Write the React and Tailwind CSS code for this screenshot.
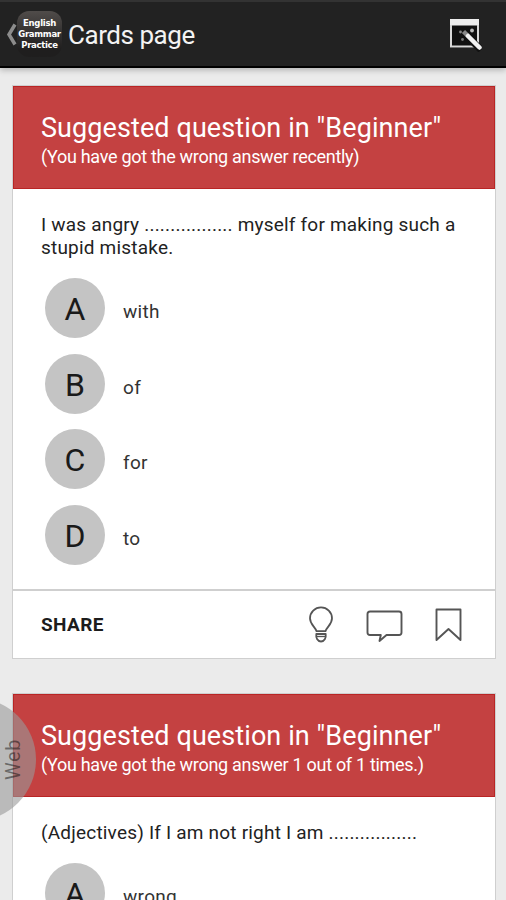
import React from "react";

const cards = [
  {
    title: 'Suggested question in "Beginner"',
    note: "(You have got the wrong answer recently)",
    question: "I was angry ................. myself for making such a stupid mistake.",
    answers: ["with", "of", "for", "to"],
  },
  {
    title: 'Suggested question in "Beginner"',
    note: "(You have got the wrong answer 1 out of 1 times.)",
    question: "(Adjectives) If I am not right I am .................",
    answers: ["wrong"],
  },
];

const WandIcon = () => (
  <svg width="34" height="34" viewBox="0 0 34 34" fill="none">
    <rect x="2" y="1" width="29" height="29" fill="#111" />
    <rect x="2" y="1" width="29" height="6.500" fill="#eeeeee" />
    <path d="M3 7V28.600H30V7" stroke="#d8d8d8" strokeWidth="2" />
    <circle cx="24" cy="12.500" r="1.9" fill="#bbb" />
    <circle cx="12.500" cy="14" r="1.4" fill="#888" />
    <circle cx="14.500" cy="21.500" r="1.4" fill="#777" />
    <path d="M17 16L33 32" stroke="#111" strokeWidth="7" />
    <path d="M15.500 13.500L20 18" stroke="#888" strokeWidth="4.500" />
    <path d="M20 18L31.500 29.500" stroke="#f2f2f2" strokeWidth="4.500" strokeLinecap="round" />
  </svg>
);

const BulbIcon = () => (
  <svg width="24" height="37" viewBox="0 0 24 37" fill="none" stroke="#555" strokeWidth="1.8" strokeLinejoin="round">
    <path d="M7.5 25.2C6 20.500 1 18.500 1 12.300A11 11 0 0 1 23 12.300C23 18.500 18 20.500 16.500 25.200Z" />
    <path d="M7.300 28H16.700C17.300 32 15.300 35.500 12 35.500S6.700 32 7.300 28Z" />
    <path d="M8 30.500H16" strokeWidth="1.300" />
  </svg>
);

const CommentIcon = () => (
  <svg className="mt-1" width="37" height="33" viewBox="0 0 37 33" fill="none" stroke="#555" strokeWidth="1.9" strokeLinejoin="round">
    <path d="M4 1.500H33Q35.500 1.500 35.500 4V22.500Q35.500 25 33 25H20.500L13.500 31L14.800 25H4Q1.500 25 1.500 22.500V4Q1.500 1.500 4 1.500Z" />
  </svg>
);

const BookmarkIcon = () => (
  <svg width="27" height="34" viewBox="0 0 27 34" fill="none" stroke="#555" strokeWidth="1.9" strokeLinejoin="round">
    <path d="M1.500 1.500H25.500V32L13.500 21L1.500 32Z" />
  </svg>
);

const Header = () => (
  <header className="h-[68px] shrink-0 flex items-center bg-[#222222] border-t-2 border-[#333333] border-b-2 border-b-black shadow-[0_2px_6px_rgba(0,0,0,0.25)]">
    <svg className="ml-[5px]" width="12" height="23" viewBox="0 0 12 23" fill="none">
      <path d="M10 1.500L4 11.500L10 21.500" stroke="#8c8c8c" strokeWidth="3.500" />
    </svg>
    <div className="w-[45px] h-[46px] rounded-[12px] bg-linear-to-b from-[#504c4a] to-[#1f1e1e] to-85% flex flex-col items-center pt-[7px] font-['DejaVu_Sans'] font-bold text-white text-[8.5px] leading-[11px] tracking-[-0.3px]">
      <span>English</span>
      <span>Grammar</span>
      <span>Practice</span>
    </div>
    <h1 className="ml-1.5 mt-[3px] text-[26px] tracking-[-0.45px] text-[#f3f3f3]">Cards page</h1>
    <div className="ml-auto mr-[24px] mt-0.5">
      <WandIcon />
    </div>
  </header>
);

const Card = ({ title, note, question, answers }) => (
  <section className="shrink-0 bg-white border border-[#cfcfcf]">
    <div className="h-[103px] bg-[#c44141] border border-[#b92525] pl-[27px] pt-[25px] text-white whitespace-nowrap">
      <h2 className="text-[27px] leading-[32px] tracking-[0.09px]">{title}</h2>
      <p className="text-[18px] leading-[26px] tracking-[-0.3px]">{note}</p>
    </div>
    <div className="h-[400px] pl-7 pr-4 pt-6">
      <p className="text-[19px] leading-[23px] tracking-[0.2px] text-[#222222]">{question}</p>
      <ul className="mt-[19px] ml-1 flex flex-col gap-[15.500px]">
        {answers.map((answer, i) => (
          <li key={answer} className="flex items-center h-[60px]">
            <span className="size-[60px] rounded-full bg-[#c4c4c4] flex items-center justify-center pt-[2px] text-[32px] text-[#1a1a1a]">
              {"ABCD"[i]}
            </span>
            <span className="ml-[18px] mt-[9px] text-[19px] tracking-[0.3px] text-[#333333]">{answer}</span>
          </li>
        ))}
      </ul>
    </div>
    <div className="h-[69px] border-t-2 border-[#cfcfcf] flex items-center pl-7 pr-[33px]">
      <span className="mt-0.5 text-[19px] font-bold tracking-[0.4px] text-[#1c1c1c]">SHARE</span>
      <div className="ml-auto flex items-center">
        <BulbIcon />
        <span className="w-[33px]" />
        <CommentIcon />
        <span className="w-[32px]" />
        <BookmarkIcon />
      </div>
    </div>
  </section>
);

const App = () => (
  <div className="relative h-[900px] w-[506px] overflow-hidden flex flex-col bg-[#ebebeb] font-['Roboto',sans-serif]">
    <Header />
    <main className="flex flex-col gap-[34px] pt-[17px] pl-3 pr-2.5">
      {cards.map((card) => (
        <Card key={card.question} {...card} />
      ))}
    </main>
    <div className="absolute left-[-87px] top-[698px] size-[123px] rounded-full bg-[#999999]/60 flex items-center justify-end pr-[10px]">
      <span className="[writing-mode:vertical-rl] rotate-180 text-[20px] leading-[26px] tracking-[0.6px] text-black/45">Web</span>
    </div>
  </div>
);

export default App;
